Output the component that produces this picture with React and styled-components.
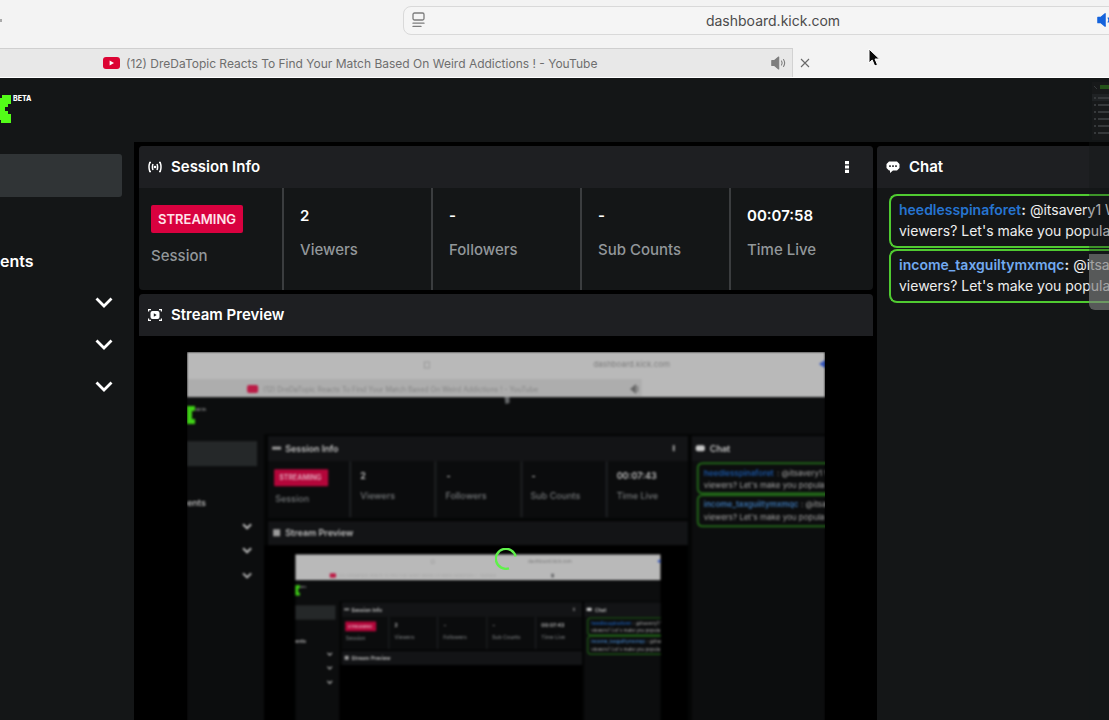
import React from 'react'
import styled, { createGlobalStyle } from 'styled-components'

const colors = {
  chrome: '#f3f3f3',
  tab: '#e8e8e8',
  surface: '#141617',
  surfaceRaised: '#1e1f22',
  selected: '#303436',
  divider: '#3b3d3f',
  muted: '#92979a',
  live: '#d9013f',
  green: '#53fc18',
}

const stats = [
  { label: 'Session', badge: 'STREAMING' },
  { label: 'Viewers', value: '2' },
  { label: 'Followers', value: '-' },
  { label: 'Sub Counts', value: '-' },
  { label: 'Time Live', value: '00:07:58' },
]

const messages = [
  { user: 'heedlesspinaforet', color: '#2674d0', start: '@itsavery1 W', rest: "viewers? Let's make you popula" },
  { user: 'income_taxguiltymxmqc', color: '#72aaf0', start: '@itsa', rest: "viewers? Let's make you popula" },
]

const tabTitle = '(12) DreDaTopic Reacts To Find Your Match Based On Weird Addictions ! - YouTube'

const App = () => {
  return (
    <Page>
      <GlobalStyle />
      <BrowserBar />
      <Header>
        <KickLogo />
        <Beta>BETA</Beta>
      </Header>
      <Body>
        <Sidebar>
          <SidebarItem $selected aria-label='Selected page' />
          <SidebarItem>ents</SidebarItem>
          {[0, 1, 2].map((item) => (
            <SidebarItem key={item} aria-label='Expand section'>
              <Chevron />
            </SidebarItem>
          ))}
        </Sidebar>
        <Main>
          <Column>
            <Panel>
              <PanelHeader>
                <BroadcastIcon />
                <PanelTitle>Session Info</PanelTitle>
                <MenuButton aria-label='Session options'>
                  <DotsIcon />
                </MenuButton>
              </PanelHeader>
              <Stats>
                {stats.map((stat) => (
                  <Stat key={stat.label}>
                    {stat.badge ? <Badge>{stat.badge}</Badge> : <Value>{stat.value}</Value>}
                    <Label>{stat.label}</Label>
                  </Stat>
                ))}
              </Stats>
            </Panel>
            <Panel $grow>
              <PanelHeader>
                <PreviewIcon />
                <PanelTitle>Stream Preview</PanelTitle>
              </PanelHeader>
              <Video>
                <VideoFrame>
                  <StreamPicture />
                  <Spinner />
                </VideoFrame>
              </Video>
            </Panel>
          </Column>
          <ChatPanel>
            <PanelHeader>
              <ChatIcon />
              <PanelTitle>Chat</PanelTitle>
            </PanelHeader>
            <Messages>
              {messages.map((message) => (
                <Message key={message.user}>
                  <p><User $color={message.color}>{message.user}</User><b>:</b> {message.start}</p>
                  <p>{message.rest}</p>
                </Message>
              ))}
            </Messages>
          </ChatPanel>
        </Main>
      </Body>
      <EdgeStrip>
        <WindowThumbnail />
        <EdgeHandle />
      </EdgeStrip>
    </Page>
  )
}

export default App

const BrowserBar = () => (
  <Browser>
    <Toolbar>
      <ToolbarMark />
      <AddressBar>
        <ReaderIcon />
        <Address type='text' aria-label='Address' defaultValue='dashboard.kick.com' />
        <SpeakerIcon width='18' height='16' color='#1463dc' />
      </AddressBar>
    </Toolbar>
    <Tabs>
      <Tab>
        <svg width='17' height='12' viewBox='0 0 17 12'>
          <rect width='17' height='12' rx='3' fill='#dc0434' />
          <path d='M6.6 3.4v5.2L11 6z' fill='#fff' />
        </svg>
        <TabTitle>{tabTitle}</TabTitle>
        <SpeakerIcon width='17' height='14' color='#7d7d7d' />
      </Tab>
      <CloseButton aria-label='Close tab'>
        <svg width='10' height='10' viewBox='0 0 10 10' stroke='#686868' strokeWidth='1.1'>
          <path d='M1 1l8 8M9 1L1 9' />
        </svg>
      </CloseButton>
      <Pointer width='14' height='20' viewBox='0 0 14 20'>
        <path d='M1 1v14l3.2-3 2.5 6 2.8-1.2L7 11h4.5z' fill='#080808' stroke='#fff' strokeWidth='1' />
      </Pointer>
    </Tabs>
  </Browser>
)

const ReaderIcon = () => (
  <svg width='13' height='16' viewBox='0 0 13 16' fill='none' stroke='#7c7c7c' strokeWidth='1.3' strokeLinecap='round'>
    <rect x='1' y='1' width='11' height='7' rx='1.5' />
    <path d='M1 11.2h11M1 14.4h8' />
  </svg>
)

const SpeakerIcon = ({ width, height, color }) => (
  <svg width={width} height={height} viewBox='0 0 17 14' fill='none' stroke={color} strokeWidth='1.1' strokeLinecap='round'>
    <path d='M.8 4.5h2.7L7.7 1v12L3.5 9.5H.8z' fill={color} strokeLinejoin='round' />
    <path d='M10.5 5q1.4 2 0 4M12.5 3.500q2.3 3.5 0 7' />
  </svg>
)

const KickLogo = () => (
  <svg width='12' height='30' viewBox='0 0 12 30'>
    <path d='M2 1h9v9H8v3H5v4h3v3h3v9H1v-3H0V4h2z' fill={colors.green} />
  </svg>
)

const Chevron = () => (
  <svg width='18' height='12' viewBox='0 0 18 12' fill='none' stroke='#fff' strokeWidth='2.8'>
    <path d='M1.5 1.5L9 9l7.5-7.5' />
  </svg>
)

const BroadcastIcon = () => (
  <svg width='14' height='12' viewBox='0 0 14 12' fill='none' stroke='#fff' strokeWidth='1.5'>
    <circle cx='7' cy='6' r='1.3' fill='#fff' stroke='none' />
    <path d='M3 1.500H1.800Q.2 6 1.800 10.500H3M11 1.500h1.200q1.600 4.500 0 9H11M5 3Q3.800 6 5 9M9 3q1.200 3 0 6' />
  </svg>
)

const PreviewIcon = () => (
  <svg width='14' height='12' viewBox='0 0 14 12' fill='none' stroke='#fff' strokeWidth='1.2'>
    <path d='M.6 2.5V.6H3M11 .6h2.4v1.9M.6 9.500v1.9H3M11 11.400h2.400V9.500' />
    <rect x='2.500' y='2' width='9' height='8' rx='2' fill='#fff' stroke='none' />
    <path d='M5.800 4.300v3.400L8.700 6z' fill={colors.surfaceRaised} stroke='none' />
  </svg>
)

const ChatIcon = () => (
  <svg width='14' height='12' viewBox='0 0 14 12'>
    <path d='M3 .5h8L13.500 3v4L11 9.500H7L4 12V9.500H3L.5 7V3z' fill='#fff' />
    <path d='M3.200 4.300h1.600v1.600H3.200zM6.200 4.300h1.600v1.600H6.200zM9.200 4.300h1.600v1.600H9.200z' fill={colors.surfaceRaised} />
  </svg>
)

const DotsIcon = () => (
  <svg width='4' height='12' viewBox='0 0 4 12' fill='#fff'>
    <path d='M0 0h4v3.200H0zM0 4.400h4v3.200H0zM0 8.800h4V12H0z' />
  </svg>
)

const WindowThumbnail = () => (
  <svg width='20' height='60' viewBox='0 0 20 60'>
    <rect x='3' y='2' width='17' height='58' fill='#17191a' />
    <path d='M5 6l3 3' stroke='#35393a' />
    <rect x='11' y='5' width='9' height='4' fill='#245319' />
    <rect x='3' y='14' width='17' height='7' fill='#1f2224' />
    {[18, 25, 32, 39, 46, 53].map((y) => (
      <path key={y} d={`M5 ${y}h2M9 ${y}h11`} stroke='#36393b' strokeWidth='2' />
    ))}
  </svg>
)

// The stream shows this same screen, so the picture nests once into itself
const StreamPicture = () => (
  <Picture viewBox='0 0 637 414'>
    <defs>
      <filter id='soft' x='0' y='0' width='100%' height='100%' colorInterpolationFilters='sRGB'>
        <feGaussianBlur stdDeviation='1.3' />
      </filter>
    </defs>
    <g filter='url(#soft)'>
      <Screen tab cursor={[317, 45]} />
      <svg x='108' y='202' width='365' height='237' viewBox='0 0 637 414'>
        <Screen cursor={[446, 34]} />
      </svg>
    </g>
  </Picture>
)

const Screen = ({ tab, cursor }) => (
  <g fontFamily='Inter, sans-serif' fontSize='9'>
    <rect width='637' height='414' fill='#0c0d0e' />
    <rect width='637' height='45' fill='#b9b9b9' />
    {tab && <rect y='27' width='454' height='18' fill='#adadad' />}
    <rect x='60' y='33' width='11' height='8' rx='2' fill='#bb1c46' />
    <text x='76' y='40' fontSize='7' fill={tab ? '#858585' : '#a5a5a5'}>{tabTitle}</text>
    {tab && <path d='M443 37l5-4v8zM450 34v6' fill='#666' stroke='#666' />}
    <path d='M237 10h5v6h-5z' fill='none' stroke='#999' />
    <text x='444' y='15' fontSize='8' textAnchor='middle' fill='#7c7c7c'>dashboard.kick.com</text>
    <path d='M631 12l6-4v8z' fill='#3658c0' />
    <path d={`M${cursor[0]} ${cursor[1]}l5 0v6l-4 1z`} fill='#66686a' />

    <path d='M0 54h8v5H5v8h3v5H0z' fill='#3fd016' />
    <text x='9' y='59' fontSize='4' fill='#ccc'>BETA</text>
    <rect y='89' width='70' height='25' fill='#252829' />
    <text x='0' y='154' fontWeight='600' fill='#b5b5b5'>ents</text>
    <path d='M56 172l4 4 4-4M56 196l4 4 4-4M56 221l4 4 4-4' fill='none' stroke='#b5b5b5' strokeWidth='2' />

    <rect x='77' y='82' width='560' height='332' fill='#040505' />
    <rect x='81' y='84' width='419' height='82' fill='#0b0c0d' />
    <rect x='81' y='84' width='419' height='25' fill='#131416' />
    <path d='M85 96h9' stroke='#9c9c9c' strokeWidth='3' />
    <text x='98' y='100' fontWeight='600' fill='#c0c0c0'>Session Info</text>
    <path d='M486 93v6' stroke='#9c9c9c' strokeWidth='2' />
    <rect x='87' y='117' width='54' height='17' rx='1' fill='#b3063a' />
    <text x='92' y='128' fontSize='7' fontWeight='700' fill='#e09cb2'>STREAMING</text>
    <path d='M163 109v56M248 109v56M334 109v56M419 109v56' stroke='#1f2123' strokeWidth='2' />
    <g fontWeight='600' fill='#c0c0c0'>
      <text x='173' y='127'>2</text>
      <text x='259' y='127'>-</text>
      <text x='344' y='127'>-</text>
      <text x='429' y='127'>00:07:43</text>
    </g>
    <g fontWeight='500' fill='#76797b'>
      <text x='88' y='150'>Session</text>
      <text x='173' y='147'>Viewers</text>
      <text x='258' y='147'>Followers</text>
      <text x='343' y='147'>Sub Counts</text>
      <text x='429' y='147'>Time Live</text>
    </g>
    <rect x='81' y='169' width='419' height='24' fill='#131416' />
    <rect x='86' y='177' width='7' height='7' fill='#9c9c9c' />
    <text x='98' y='184' fontWeight='600' fill='#c0c0c0'>Stream Preview</text>
    <rect x='77' y='193' width='423' height='221' fill='#000' />

    <rect x='504' y='84' width='133' height='330' fill='#0c0d0e' />
    <rect x='504' y='84' width='133' height='25' fill='#131416' />
    <rect x='508' y='93' width='9' height='6' rx='2' fill='#c8c8c8' />
    <text x='522' y='100' fontWeight='600' fill='#c0c0c0'>Chat</text>
    <path d='M640 111H515q-5 0-5 5v20q0 5 5 5H640M640 143H515q-5 0-5 5v21q0 5 5 5H640' fill='none' stroke='#216418' strokeWidth='2' />
    <g fontSize='8' fill='#a6a6a6'>
      <text x='516' y='124' fontWeight='600' fill='#1a56a6'>heedlesspinaforet</text>
      <text x='589' y='124'>: @itsavery1 W</text>
      <text x='516' y='136'>{messages[0].rest}</text>
      <text x='516' y='155' fontWeight='600' fill='#3c76b4'>income_taxguiltymxmqc</text>
      <text x='613' y='155'>: @itsa</text>
      <text x='516' y='168'>{messages[1].rest}</text>
    </g>
  </g>
)

const Spinner = () => (
  <SpinnerIcon width='22' height='22' viewBox='0 0 22 22' fill='none' stroke='#5ff04a' strokeWidth='2.4'>
    <path d='M20.600 8.500A10 10 0 1 0 14 20.300' />
  </SpinnerIcon>
)

const GlobalStyle = createGlobalStyle`
  * {
    box-sizing: border-box;
    margin: 0;
  }
  body {
    background: #000;
    color: white;
    font-family: Inter, sans-serif;
  }
  button, input {
    font-family: inherit;
    border: 0;
    padding: 0;
    background: none;
    color: inherit;
  }
  svg {
    display: block;
    flex-shrink: 0;
  }
`

const Page = styled.div`
  position: relative;
  display: flex;
  flex-direction: column;
  height: 100vh;
  overflow: hidden;
`

const Browser = styled.div`
  background: ${colors.chrome};
  border-bottom: 1px solid #fff;
  flex-shrink: 0;
`

const Toolbar = styled.div`
  display: flex;
  align-items: center;
  justify-content: space-between;
  height: 48px;
  padding: 0 0 8px;
  overflow: hidden;
`

const ToolbarMark = styled.span`
  width: 2px;
  height: 3px;
  background: #aaa;
`

const AddressBar = styled.div`
  display: flex;
  align-items: center;
  flex-shrink: 0;
  width: calc(100% - 368px);
  height: 29px;
  margin-right: -35px;
  padding: 0 28px 0 8px;
  background: #f5f5f5;
  border: 1px solid #d9d9d9;
  border-radius: 8px;
`

const Address = styled.input`
  flex: 1;
  min-width: 0;
  padding-left: 24px;
  text-align: center;
  font-size: 14px;
  color: #4b4b4b;
  outline: 0;
`

const Tabs = styled.div`
  display: flex;
  height: 29px;
`

const Tab = styled.div`
  display: flex;
  align-items: center;
  gap: 6px;
  width: 793px;
  padding: 0 4px 0 103px;
  background: ${colors.tab};
  border-top: 1px solid #cfcfcf;
  border-right: 1px solid #d2d2d2;
`

const TabTitle = styled.span`
  flex: 1;
  white-space: nowrap;
  font-size: 12px;
  color: #6e6e6e;
`

const CloseButton = styled.button`
  display: flex;
  align-items: center;
  padding: 0 7px;
`

const Pointer = styled.svg`
  margin-left: 51px;
`

const Header = styled.header`
  display: flex;
  flex-shrink: 0;
  gap: 1px;
  height: 64px;
  padding-top: 16px;
  background: ${colors.surface};
`

const Beta = styled.span`
  padding-top: 1px;
  font-size: 7px;
  line-height: 8px;
  font-weight: 800;
`

const Body = styled.div`
  display: flex;
  flex: 1;
  min-height: 0;
`

const Sidebar = styled.nav`
  width: 134px;
  flex-shrink: 0;
  padding: 12px 12px 0 0;
  background: ${colors.surface};
`

const SidebarItem = styled.button`
  display: flex;
  align-items: center;
  justify-content: ${({ children }) => (typeof children === 'string' ? 'flex-start' : 'flex-end')};
  width: 100%;
  height: ${({ $selected }) => ($selected ? '43px' : '42px')};
  margin-bottom: ${({ $selected }) => ($selected ? '43px' : '0')};
  padding-right: 9px;
  border-radius: 0 3px 3px 0;
  background: ${({ $selected }) => ($selected ? colors.selected : 'none')};
  font-size: 16px;
  font-weight: 600;
`

const Main = styled.main`
  display: grid;
  grid-template-columns: minmax(0, 734px) minmax(0, 1fr);
  flex: 1;
  gap: 4px;
  min-width: 0;
  padding: 4px 0 0 5px;
  background: #000;
`

const Column = styled.div`
  display: flex;
  flex-direction: column;
  gap: 4px;
  min-height: 0;
`

const Panel = styled.section`
  flex: ${({ $grow }) => ($grow ? '1' : 'none')};
  min-height: 0;
  overflow: hidden;
  border-radius: 4px;
  background: ${({ $grow }) => ($grow ? '#000' : colors.surface)};
`

const ChatPanel = styled(Panel)`
  border-radius: 4px 0 0 0;
`

const PanelHeader = styled.div`
  display: flex;
  align-items: center;
  gap: 9px;
  height: 42px;
  padding: 0 16px 0 9px;
  background: ${colors.surfaceRaised};
`

const PanelTitle = styled.h2`
  font-size: 15px;
  line-height: 20px;
  font-weight: 600;
`

const MenuButton = styled.button`
  margin-left: auto;
  padding: 8px;
`

const Stats = styled.div`
  display: grid;
  grid-template-columns: repeat(5, minmax(0, 1fr));
  height: 102px;
  margin: 0 -7px 0 -4px;
`

const Stat = styled.div`
  padding: 17px 0 0 16px;
  border-right: 2px solid ${colors.divider};
  &:last-child {
    border: 0;
  }
`

const Value = styled.p`
  font-size: 15px;
  line-height: 22px;
  font-weight: 600;
`

const Label = styled.p`
  padding-top: 12px;
  font-size: 15px;
  line-height: 22px;
  font-weight: 500;
  color: ${colors.muted};
`

const Badge = styled.span`
  display: block;
  width: fit-content;
  padding: 0 7px;
  border-radius: 2px;
  background: ${colors.live};
  color: #ffe3ea;
  font-size: 13px;
  line-height: 28px;
  font-weight: 600;
`

const Video = styled.div`
  padding: 16px 48px;
`

const VideoFrame = styled.div`
  position: relative;
`

const Picture = styled.svg`
  width: 100%;
  height: auto;
`

const SpinnerIcon = styled.svg`
  position: absolute;
  inset: 0;
  margin: auto;
`

const Messages = styled.div`
  display: flex;
  flex-direction: column;
  gap: 1px;
  padding: 6px 0 0 12px;
`

const Message = styled.div`
  padding: 3px 0 5px 8px;
  border: 2px solid #50cb31;
  border-right: 0;
  border-radius: 8px 0 0 8px;
  white-space: nowrap;
  overflow: hidden;
  font-size: 14px;
  line-height: 21px;
  color: #eee;
`

const User = styled.b`
  font-weight: 600;
  color: ${({ $color }) => $color};
`

const EdgeStrip = styled.div`
  position: absolute;
  top: 80px;
  right: 0;
  bottom: 0;
  width: 20px;
  background: rgba(20, 22, 23, .3);
  pointer-events: none;
`

const EdgeHandle = styled.div`
  height: 56px;
  margin-top: 114px;
  border-radius: 0 0 0 6px;
  background: rgba(155, 155, 155, .5);
`
